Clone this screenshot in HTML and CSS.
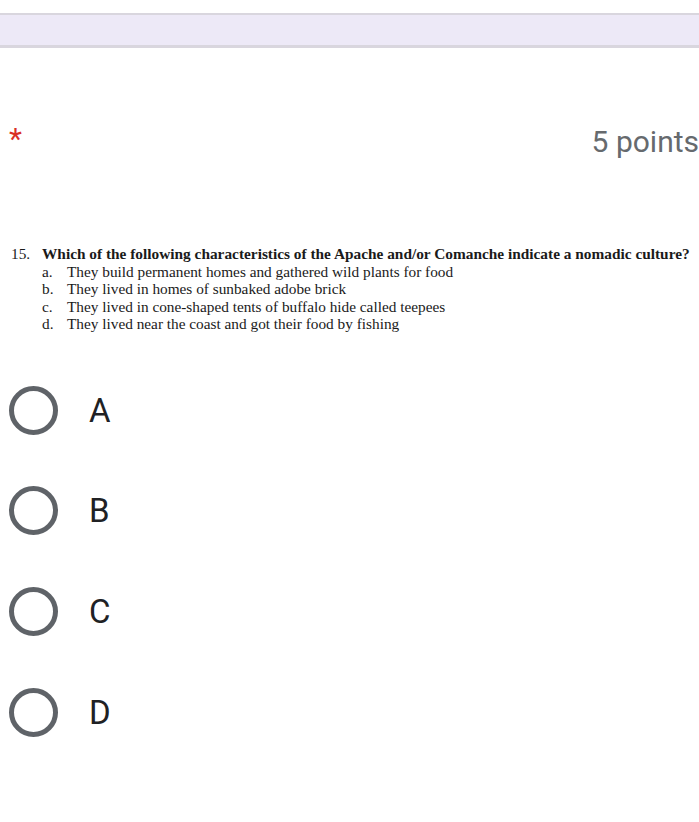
FILE: index.html
```html
<!DOCTYPE html>
<html>
<head>
<meta charset="utf-8">
<link rel="stylesheet" href="styles.css">
</head>
<body>
<div class="page">
  <div class="banner"></div>
  <div class="header">
    <span class="star">*</span>
    <span class="points">5 points</span>
  </div>
  <div class="question">
    <div class="qline"><span class="num">15.</span><span class="qtext">Which of the following characteristics of the Apache and/or Comanche indicate a nomadic culture?</span></div>
    <div class="opt"><span class="ol">a.</span><span>They build permanent homes and gathered wild plants for food</span></div>
    <div class="opt"><span class="ol">b.</span><span>They lived in homes of sunbaked adobe brick</span></div>
    <div class="opt"><span class="ol">c.</span><span>They lived in cone-shaped tents of buffalo hide called teepees</span></div>
    <div class="opt"><span class="ol">d.</span><span>They lived near the coast and got their food by fishing</span></div>
  </div>
  <div class="choices">
    <div class="choice"><span class="radio"></span><span class="label">A</span></div>
    <div class="choice"><span class="radio"></span><span class="label">B</span></div>
    <div class="choice"><span class="radio"></span><span class="label">C</span></div>
    <div class="choice"><span class="radio"></span><span class="label">D</span></div>
  </div>
</div>
</body>
</html>
```
FILE: styles.css
```css
html, body {
  margin: 0;
  padding: 0;
  background: #ffffff;
  overflow: hidden;
}
.page {
  width: 699px;
  height: 822px;
  overflow: hidden;
  font-family: Roboto, "Liberation Sans", sans-serif;
}
.banner {
  margin-top: 13px;
  height: 30px;
  background: #ede9f7;
  border-top: 2px solid #d9d6de;
  border-bottom: 3px solid #d9d6de;
}
.header {
  display: flex;
  justify-content: space-between;
  align-items: flex-start;
  margin-top: 73px;
  padding-left: 9px;
  height: 124px;
}
.star {
  color: #d93025;
  font-size: 30px;
  line-height: 30px;
  margin-top: 3px;
}
.points {
  color: #666a6e;
  font-size: 30px;
  line-height: 32px;
  margin-top: 5px;
  margin-right: 0;
}
.question {
  font-family: "Liberation Serif", "Times New Roman", serif;
  color: #1a1a1a;
  font-size: 15.3px;
  line-height: 17.6px;
  padding-left: 11px;
}
.qline {
  display: flex;
}
.num {
  width: 31px;
}
.qtext {
  font-weight: bold;
  white-space: nowrap;
  font-size: 15.35px;
}
.opt {
  display: flex;
  padding-left: 31px;
}
.ol {
  width: 25px;
}
.choices {
  margin-top: 27px;
  display: flex;
  flex-direction: column;
}
.choice {
  display: flex;
  align-items: center;
  height: 100.6px;
}
.radio {
  box-sizing: border-box;
  width: 49px;
  height: 49px;
  border: 5px solid #5f6368;
  border-radius: 50%;
  margin-left: 9px;
}
.label {
  margin-left: 31px;
  font-size: 33px;
  color: #202124;
}
```
